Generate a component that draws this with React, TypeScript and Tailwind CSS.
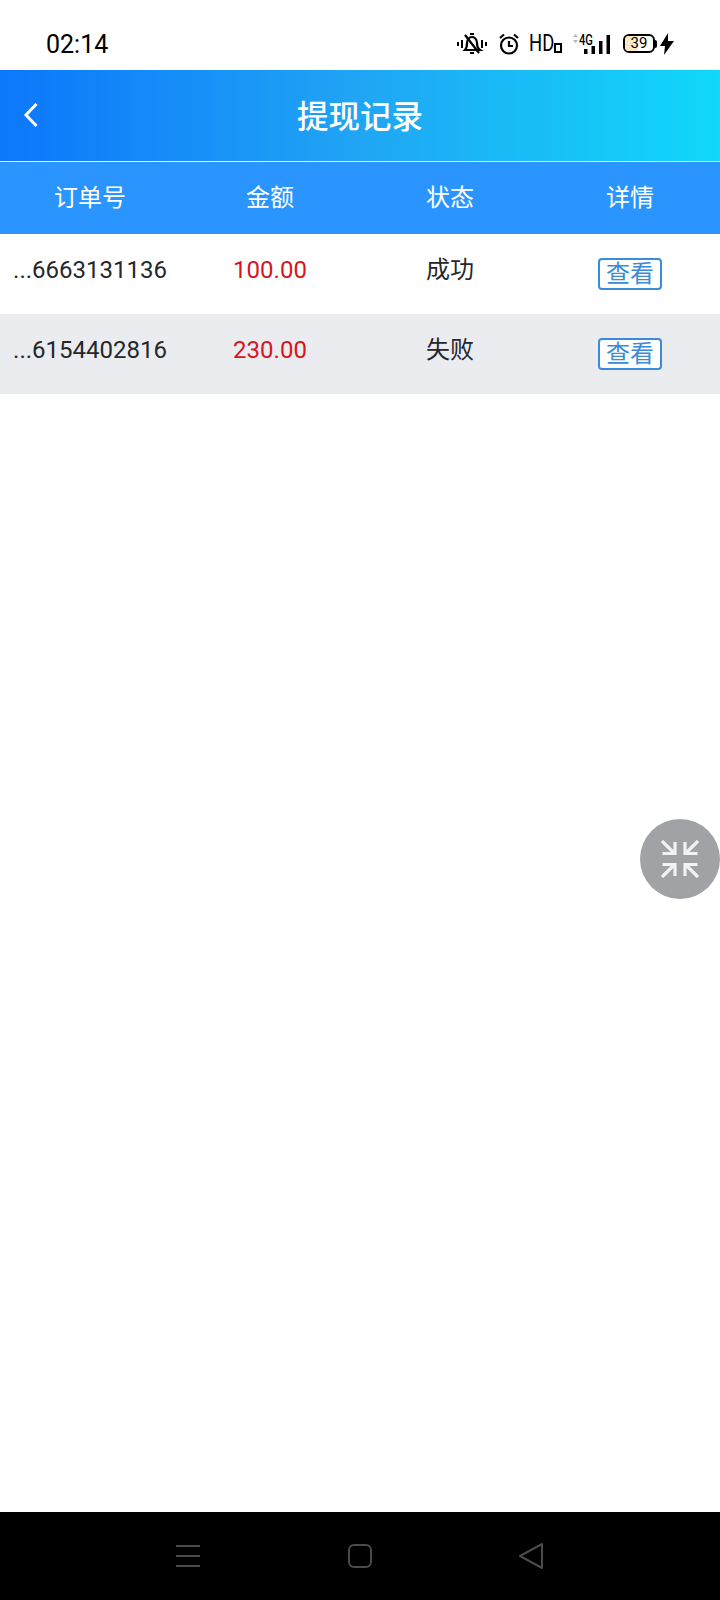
import React from "react";

const rows = [
  { id: "...6663131136", amount: "100.00", status: "成功", bg: "bg-white" },
  { id: "...6154402816", amount: "230.00", status: "失败", bg: "bg-[#ebecf0]" },
];

function StatusIcons() {
  return (
    <div className="flex items-center">
      {/* muted bell */}
      <svg width="30" height="24" viewBox="1 0 30 24" fill="none" stroke="#000" strokeWidth="2.2">
        <path d="M2 10v4M6 8v8M26 8v8M30 10v4" strokeWidth="2" />
        <path d="M9 18c2-2 2-4 2-7 0-3 2-6 5-6s5 3 5 6c0 3 0 5 3 7z" />
        <path d="M14 21h4M14 2h4M9 3l14 18" />
      </svg>
      {/* alarm */}
      <svg width="22" height="22" viewBox="0 0 22 22" fill="none" stroke="#000" strokeWidth="2.2" className="ml-[11px]">
        <circle cx="11" cy="12.5" r="8" />
        <path d="M11 8V13H15M2 5l4-3.5M20 5l-4-3.5" />
      </svg>
      <div className="ml-[9px] flex items-end">
        <span className="w-[25px] origin-left scale-x-[0.8] font-['Roboto',sans-serif] text-[23px] leading-[24px] font-normal text-black">HD</span>
        <span className="mb-[3px] h-[10px] w-[8px] border-[2.5px] border-black" />
      </div>
      {/* 4G signal */}
      <div className="relative ml-[10px] h-[26px] w-[39px]">
        <svg width="39" height="26" viewBox="0 0 39 26" className="absolute inset-0">
          <path d="M1 6l2.500-3 2.500 3zM1 9l2.500 3 2.500-3z" fill="#b5b5b5" />
          <rect x="12" y="18" width="3.500" height="5" fill="#000" />
          <rect x="19.500" y="15" width="3.500" height="8" fill="#000" />
          <rect x="27" y="10" width="3.500" height="13" fill="#000" />
          <rect x="34.500" y="4" width="3.500" height="19" fill="#000" />
        </svg>
        <span className="absolute top-[2px] left-[7px] origin-left scale-x-[0.8] font-['Roboto',sans-serif] text-[14px] leading-[14px] font-medium text-black">4G</span>
      </div>
      {/* battery */}
      <div className="relative ml-[12px] flex h-[19px] w-[32px] items-center overflow-hidden rounded-[6px] border-2 border-black">
        <div className="h-full w-[13px] bg-[#fbe9c4]" />
        <span className="absolute inset-0 flex items-center justify-center font-['Roboto',sans-serif] text-[15px] leading-none text-black">39</span>
      </div>
      <div className="h-[8px] w-[2px] rounded-r bg-black" />
      <svg width="14" height="22" viewBox="0 0 14 22" className="ml-[3px]">
        <path d="M8 0L0 13h5l-1 9 10-14H8z" fill="#000" />
      </svg>
    </div>
  );
}

export default function App() {
  return (
    <div className="relative flex h-[1600px] w-[720px] flex-col overflow-hidden bg-white font-['Roboto','Noto_Sans_CJK_SC',sans-serif]">
      {/* status bar */}
      <div className="flex h-[70px] items-center justify-between pt-[17px] pr-[46px] pl-[46px]">
        <span className="pt-[2px] text-[25px] leading-none text-black">02:14</span>
        <StatusIcons />
      </div>

      {/* title bar */}
      <div className="relative flex h-[91px] items-center justify-center bg-linear-to-r/srgb from-[#0c77fb] via-[#20a5f4] to-[#0fd8f9] pt-[4px]">
        <svg width="16" height="26" viewBox="0 0 16 26" fill="none" stroke="#fff" strokeWidth="3" className="absolute top-[32px] left-[23px]">
          <path d="M13.500 2L3 13l10.500 11" />
        </svg>
        <h1 className="text-[31.500px] leading-none font-medium text-white">提现记录</h1>
      </div>
      <div className="h-px bg-white/80" />

      {/* table head */}
      <div className="grid h-[72px] grid-cols-4 items-center bg-[#2b95ff] text-center text-[24px] text-white">
        <span>订单号</span>
        <span>金额</span>
        <span>状态</span>
        <span>详情</span>
      </div>

      {rows.map((r) => (
        <div key={r.id} className={`grid h-[80px] grid-cols-4 items-center text-center ${r.bg}`}>
          <span className="pb-[8px] text-[24px] text-[#25272b]">{r.id}</span>
          <span className="pb-[8px] text-[24px] text-[#d9141c]">{r.amount}</span>
          <span className="pb-[8px] text-[24px] text-[#25272b]">{r.status}</span>
          <div className="flex justify-center">
            <button className="flex h-[32px] w-[64px] items-center justify-center rounded-[4px] border-2 border-[#3a8bd8] bg-white text-[24px] leading-none text-[#3a8bd8]">
              查看
            </button>
          </div>
        </div>
      ))}

      <div className="flex-1" />

      {/* nav bar */}
      <div className="relative flex h-[88px] items-center bg-black">
        <div className="ml-[176px] flex w-[24px] flex-col gap-[8px]">
          <div className="h-[2px] bg-[#4a4a4a]" />
          <div className="h-[2px] bg-[#4a4a4a]" />
          <div className="h-[2px] bg-[#4a4a4a]" />
        </div>
        <div className="ml-[148px] h-[24px] w-[24px] rounded-[6px] border-2 border-[#4a4a4a]" />
        <svg width="26" height="28" viewBox="0 0 26 28" fill="none" stroke="#4a4a4a" strokeWidth="2" strokeLinejoin="round" className="ml-[146px]">
          <path d="M24 2v24L2 14z" />
        </svg>
      </div>

      {/* floating collapse button */}
      <div className="absolute top-[819px] left-[640px] flex h-[80px] w-[80px] items-center justify-center rounded-full bg-[#a0a2a6]">
        <svg width="38" height="38" viewBox="0 0 38 38" fill="none" stroke="#f2f2f2" strokeWidth="3.200">
          <path d="M1 1l12 12M1.500 13.500h12.500V2M37 1L25 13M36.500 13.500H24V2M1 37l12-12M1.500 24.500h12.500V36M37 37L25 25M36.500 24.500H24V36" />
        </svg>
      </div>
    </div>
  );
}
